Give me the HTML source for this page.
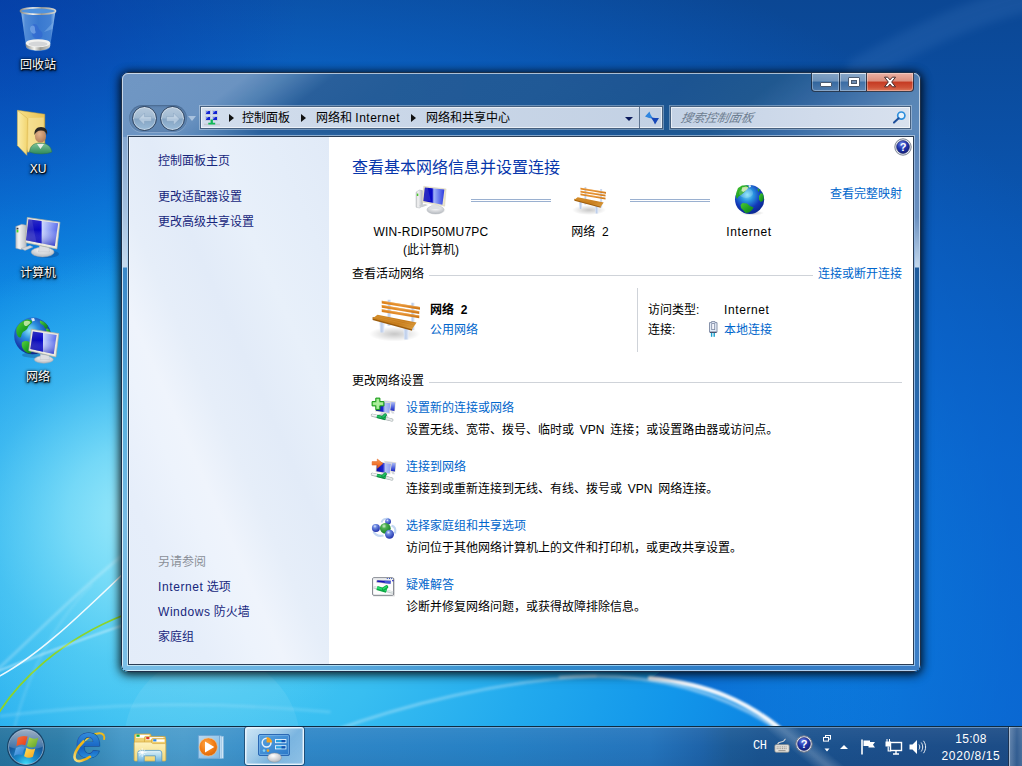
<!DOCTYPE html>
<html lang="zh-CN">
<head>
<meta charset="utf-8">
<title>网络和共享中心</title>
<style>
*,*:before,*:after{box-sizing:border-box;margin:0;padding:0}
html,body{width:1022px;height:766px;overflow:hidden;background:#0b58b8}
body{font-family:"Liberation Sans","Noto Sans CJK SC",sans-serif;font-size:12px;color:#000;position:relative}
.abs{position:absolute}
#bg{position:absolute;left:0;top:0;width:1022px;height:766px}
/* desktop icons */
.dlabel{position:absolute;width:76px;text-align:center;color:#fff;font-size:12px;line-height:14px;white-space:nowrap;
 text-shadow:0 1px 2px #000,0 0 3px rgba(0,0,0,.95),1px 1px 1px rgba(0,0,0,.9),0 2px 4px rgba(0,0,0,.6)}
/* window */
#win{position:absolute;left:121px;top:72px;width:800px;height:600px;border-radius:7px;
 box-shadow:0 1px 8px 1px rgba(0,0,0,.78),0 3px 13px 0 rgba(0,0,0,.32);overflow:hidden}
#gbg{position:absolute;left:-121px;top:-72px;width:1022px;height:766px;filter:blur(5px)}
#glass{position:absolute;left:0;top:0;width:800px;height:600px;border-radius:7px;border:1px solid #1d2f48;
 background:
  linear-gradient(118deg,rgba(255,255,255,0) 0,rgba(255,255,255,0) 8%,rgba(255,255,255,.07) 12%,rgba(255,255,255,0) 17%,rgba(255,255,255,.06) 24%,rgba(255,255,255,0) 30%,rgba(255,255,255,0) 100%),
  linear-gradient(90deg,rgba(186,204,228,.52) 0%,rgba(182,202,227,.47) 18%,rgba(170,195,225,.30) 38%,rgba(160,190,225,.17) 55%,rgba(160,190,225,.15) 78%,rgba(170,195,228,.30) 100%)}
#glass:before{content:"";position:absolute;left:0;top:0;right:0;height:66px;border-radius:6px 6px 0 0;opacity:.95;
 background:linear-gradient(143deg,#7197c3 0,#7096c2 5%,#6c93c0 14.5%,#4f7fb2 19%,#275d99 24.5%,#225a96 32%,#205894 50%,#1c5490 64.6%,#20588f 75%,#3a6ca4 83.7%,#5a86b6 92.7%,#608bbb 100%);
 -webkit-mask-image:linear-gradient(180deg,#000 0,#000 90%,rgba(0,0,0,.7) 100%)}
#glass:after{content:"";position:absolute;left:0;top:0;right:0;bottom:0;border-radius:6px;border:1px solid rgba(255,255,255,.62)}
#content{position:absolute;left:7px;top:64px;width:786px;height:529px;border:1px solid #2b3d55;background:#fff;
 box-shadow:0 0 0 1px rgba(255,255,255,.45)}
#left{position:absolute;left:0;top:0;width:200px;height:527px;border-left:1px solid #f8fbfe;
 background:linear-gradient(66deg,#e3ecf9 0%,#e6eefa 18%,#edf3fc 30%,#eff4fc 36%,#e6eef9 46%,#e2ebf8 58%,#e8f0fa 72%,#e4edf9 86%,#e1eaf7 100%)}
#left a{position:absolute;left:29px;color:#1e3287;white-space:nowrap;line-height:14px;text-decoration:none}
.lnk{color:#0066cc;text-decoration:none;white-space:nowrap}
.t{position:absolute;white-space:nowrap;line-height:14px}
#cap{position:absolute;left:690px;top:1px;width:103px;height:19px}
.cb{position:absolute;top:0;height:19px;border:1px solid rgba(25,40,62,.85);border-top:none;
 background:linear-gradient(180deg,rgba(255,255,255,.42) 0,rgba(255,255,255,.30) 45%,rgba(255,255,255,.02) 50%,rgba(255,255,255,.14) 100%);
 box-shadow:inset 0 0 0 1px rgba(255,255,255,.32)}
.cx{background:linear-gradient(180deg,#ecb1a4 0,#dc8f7d 45%,#c53a22 50%,#cf5237 80%,#dc7a5c 100%)}
.gmin{position:absolute;left:8px;top:9px;width:12px;height:5px;background:#fff;border:1px solid #4a5a70;border-radius:1px}
.gmax{position:absolute;left:8px;top:4px;width:12px;height:10px;border:1px solid #4a5a70;background:#fff;border-radius:1px}
.gmax:after{content:"";position:absolute;left:2px;top:2px;width:6px;height:4px;border:1px solid #4a5a70;background:#6e8db2}
#navpill{position:absolute;left:8px;top:33px;width:58px;height:27px;border-radius:14px;background:rgba(30,60,100,.16);box-shadow:inset 0 1px 2px rgba(20,40,70,.35),0 1px 0 rgba(255,255,255,.2)}
.nb{position:absolute;top:34px;width:25px;height:25px;border-radius:50%;border:1px solid #2f4460;
 background:linear-gradient(180deg,#b6c9dc 0,#a0b9d1 48%,#84a4c3 52%,#9abbd8 100%);box-shadow:inset 0 0 0 1px rgba(255,255,255,.38)}
.nb svg{position:absolute;left:0;top:0}
#addr{position:absolute;left:79px;top:34px;width:463px;height:23px;border:1px solid #46607f;
 background:linear-gradient(90deg,#d3deed 0,#cad7e8 40%,#c3d1e4 100%);box-shadow:0 0 0 1px rgba(255,255,255,.33),inset 0 0 0 1px rgba(255,255,255,.6)}
#srch{position:absolute;left:549px;top:34px;width:241px;height:23px;border:1px solid #46607f;
 background:linear-gradient(90deg,#c4d2e5 0,#d0dbeb 60%,#d8e1ee 100%);box-shadow:0 0 0 1px rgba(255,255,255,.33),inset 0 0 0 1px rgba(255,255,255,.6)}
.ar{position:absolute;top:7px;width:0;height:0;border-top:4px solid transparent;border-bottom:4px solid transparent;border-left:5px solid #111}
#pg{position:absolute;left:-129px;top:-137px;width:1022px;height:766px}
.nav{color:#17267c}
#pg .t{margin-top:1px}
#pg .lp{margin-top:2px}
.ctr{text-align:center}
/* taskbar */
#tb{position:absolute;left:0;top:726px;width:1022px;height:40px;
 background:linear-gradient(180deg,rgba(255,255,255,.06) 0,rgba(255,255,255,0) 50%,rgba(0,20,60,.06) 100%),
 linear-gradient(90deg,#26749f 0%,#2c7ca8 6%,#4498c8 12%,#4a9ccc 18%,#3088c8 29%,#2680c4 49%,#2474bc 63.6%,#1e64aa 68.5%,#1c5a96 71.4%,#1a5490 74.4%,#1c4e8a 88%,#1c4c86 100%);
 border-top:1px solid #0e2a40}
#tb:before{content:"";position:absolute;left:0;top:0;width:100%;height:1px;background:rgba(190,225,250,.42)}
</style>
</head>
<body>
<svg id="bg" viewBox="0 0 1022 766">
 <defs>
  <linearGradient id="bgv" x1="0" y1="0" x2="0" y2="1">
   <stop offset="0" stop-color="#0b4794"/><stop offset=".3" stop-color="#0a56b2"/><stop offset=".6" stop-color="#0a61c8"/><stop offset="1" stop-color="#0a67d2"/>
  </linearGradient>
  <radialGradient id="bgc" cx="230" cy="640" r="1000" gradientUnits="userSpaceOnUse" gradientTransform="translate(230 640) scale(1 .75) translate(-230 -640)">
   <stop offset="0" stop-color="#48c9f3"/><stop offset=".15" stop-color="#38bef1"/><stop offset=".3" stop-color="#22aaee"/><stop offset=".45" stop-color="#1296ea"/><stop offset=".6" stop-color="#0c80e0" stop-opacity=".9"/><stop offset=".8" stop-color="#0a6ad4" stop-opacity=".5"/><stop offset="1" stop-color="#0a62cc" stop-opacity="0"/>
  </radialGradient>
  <radialGradient id="bgg" cx="135" cy="515" r="270" gradientUnits="userSpaceOnUse">
   <stop offset="0" stop-color="#a0ecfb" stop-opacity=".95"/><stop offset=".25" stop-color="#8ee6fa" stop-opacity=".75"/><stop offset=".55" stop-color="#7adff8" stop-opacity=".35"/><stop offset="1" stop-color="#6ad8f6" stop-opacity="0"/>
  </radialGradient>
  <linearGradient id="bgd" x1="700" y1="690" x2="900" y2="690" gradientUnits="userSpaceOnUse"><stop offset="0" stop-color="#0a66d0" stop-opacity=".75"/><stop offset="1" stop-color="#0a66d0" stop-opacity="0"/></linearGradient>
  <radialGradient id="bgt" cx="0" cy="0" r="300" gradientUnits="userSpaceOnUse">
   <stop offset="0" stop-color="#0032aa" stop-opacity=".52"/><stop offset=".5" stop-color="#0032aa" stop-opacity=".26"/><stop offset="1" stop-color="#0032aa" stop-opacity="0"/>
  </radialGradient>
  <filter id="bl4" x="-20%" y="-20%" width="140%" height="140%"><feGaussianBlur stdDeviation="4"/></filter>
  <filter id="bl1" x="-20%" y="-20%" width="140%" height="140%"><feGaussianBlur stdDeviation=".9"/></filter>
  <filter id="bl2" x="-20%" y="-20%" width="140%" height="140%"><feGaussianBlur stdDeviation="1.4"/></filter>
 </defs>
 <g id="bgall">
 <rect width="1022" height="766" fill="url(#bgv)"/>
 <rect width="1022" height="766" fill="url(#bgc)"/>
 <rect width="1022" height="766" fill="url(#bgg)"/>
 <rect width="320" height="320" fill="url(#bgt)"/>
 <path d="M650 679 C705 685 748 700 792 740 L1022 740 L1022 600 L760 600 Z" fill="url(#bgd)"/>
 <!-- light streaks -->
 <g fill="none" stroke-linecap="round">
  <path d="M-2 714 C18 682 60 640 124 615" stroke="#8cd428" stroke-width="1.8" opacity="1"/>
  <path d="M-2 677 C40 655 85 610 124 573" stroke="#fff" stroke-width="1.6" opacity=".9"/>
  <path d="M-2 669 C30 640 70 598 124 554" stroke="#fff" stroke-width="1.2" filter="url(#bl2)" opacity=".55"/>
  <path d="M-2 671 C40 655 85 638 124 625" stroke="#fff" stroke-width="1.3" filter="url(#bl1)" opacity=".8"/>
  <path d="M14 730 C25 680 55 620 92 585" stroke="#fff" stroke-width="1" filter="url(#bl2)" opacity=".35"/>
  <path d="M330 732 C400 706 500 680 596 676" stroke="#fff" stroke-width="1.6" filter="url(#bl2)" opacity=".6"/>
  <path d="M560 677 C640 671 720 686 792 739" stroke="#fff" stroke-width="2.6" filter="url(#bl2)" opacity=".6"/>
  <path d="M650 678 C705 684 748 699 792 739" stroke="#fff" stroke-width="4.5" filter="url(#bl1)" opacity=".95"/>
  <path d="M0 716 C100 704 200 700 330 712" stroke="#c8f0ff" stroke-width="1.4" filter="url(#bl2)" opacity=".4"/>
  <circle cx="212" cy="742" r="88" fill="#fff" opacity=".07"/>
  <path d="M860 70 C930 30 980 10 1022 0" stroke="#5a8fd0" stroke-width="26" filter="url(#bl4)" opacity=".16"/>
 </g>
 </g>
</svg>

<!-- desktop icons -->
<svg class="abs" style="left:14px;top:2px" width="48" height="52" viewBox="0 0 48 52">
 <defs>
  <linearGradient id="rb" x1="0" y1="0" x2="1" y2="0"><stop offset="0" stop-color="#9cc4ee" stop-opacity=".95"/><stop offset=".12" stop-color="#5a94dc" stop-opacity=".9"/><stop offset=".5" stop-color="#3f7fd4" stop-opacity=".88"/><stop offset=".86" stop-color="#4a88d8" stop-opacity=".9"/><stop offset="1" stop-color="#a4caf0" stop-opacity=".95"/></linearGradient>
  <linearGradient id="rbm" x1="0" y1="0" x2="1" y2="0"><stop offset="0" stop-color="#8a8a84"/><stop offset=".35" stop-color="#f4f4f0"/><stop offset=".6" stop-color="#9a9a94"/><stop offset="1" stop-color="#d8d8d2"/></linearGradient>
 </defs>
 <path d="M7 9L12 45c.4 2.4 5.3 4 12 4s11.6-1.6 12-4L41.5 9z" fill="url(#rb)"/>
 <path d="M30 30L39.5 20 38.6 27z" fill="#7fb2ea" opacity=".5"/>
 <path d="M17.5 24c2-3 5-2 6 0s1 3 3 4.5 3 5 1 7-6 2-8-.5-1-4-2-6-1-3.5 0-5z" fill="#2f64d0" opacity=".6"/>
 <path d="M16.5 25c1-2 3-2 4-.5s0 3 1 5-2 3-3.5 1.5-2.5-4-1.5-6z" fill="#8cb8ec" opacity=".6"/>
 <path d="M11.8 43.5c0 2.8 5.4 5 12.2 5s12.2-2.2 12.2-5v-2.5H11.8z" fill="url(#rbm)"/>
 <ellipse cx="24" cy="41.2" rx="12.2" ry="4" fill="#f2f2f0"/>
 <ellipse cx="24" cy="42" rx="9.5" ry="2.6" fill="#d4d6d8"/>
 <ellipse cx="24" cy="9" rx="17.6" ry="3.3" fill="#4f92de" stroke="url(#rbm)" stroke-width="1.5"/>
</svg>
<div class="dlabel" style="left:0;top:58px">回收站</div>

<svg class="abs" style="left:14px;top:108px" width="44" height="50" viewBox="0 0 44 50">
 <defs>
  <linearGradient id="uf" x1="0" y1="0" x2="1" y2="0"><stop offset="0" stop-color="#f7e08a"/><stop offset="1" stop-color="#e9c152"/></linearGradient>
  <linearGradient id="uf2" x1="0" y1="0" x2="1" y2="0"><stop offset="0" stop-color="#fbedaa"/><stop offset="1" stop-color="#f2d570"/></linearGradient>
  <radialGradient id="sk" cx=".4" cy=".35" r=".8"><stop offset="0" stop-color="#e3b28a"/><stop offset="1" stop-color="#a87450"/></radialGradient>
  <linearGradient id="sh" x1="0" y1="0" x2="0" y2="1"><stop offset="0" stop-color="#7fc69a"/><stop offset="1" stop-color="#2f8a5a"/></linearGradient>
 </defs>
 <path d="M3.8 2.3l27 3.9v34l-17.2 4z" fill="url(#uf)" stroke="#c9a23a" stroke-width=".5"/>
 <path d="M14.5 10l15.2-.5v30l-15.6 3.5z" fill="#fbefb5" opacity=".45"/>
 <path d="M3.4 2.3l10.2 8.2-.8 36.8-9.4-9.8z" fill="url(#uf2)" stroke="#d4b04c" stroke-width=".5"/>
 <path d="M15.5 44c.5-6 4-9 10.5-9s11 3 12 9c-5 2.5-17 2.5-22.5 0z" fill="url(#sh)" stroke="#2a7048" stroke-width=".5"/>
 <path d="M23 36l3.5 5 3.5-5z" fill="#e8efe6"/>
 <ellipse cx="26.5" cy="28" rx="5.6" ry="6.6" fill="url(#sk)"/>
 <path d="M20.5 27c-.5-5 2-8 6.5-8s7 3 6 8c-1-3-2.5-4.5-6-4.5s-5 1.5-6.5 4.5z" fill="#2a2622"/>
</svg>
<div class="dlabel" style="left:0;top:162px">XU</div>

<svg class="abs" style="left:13px;top:214px" width="50" height="46" viewBox="0 0 50 46">
 <defs>
  <linearGradient id="scr" x1="0" y1="0" x2="1" y2="0"><stop offset="0" stop-color="#1414b0"/><stop offset=".4" stop-color="#0606c4"/><stop offset=".47" stop-color="#0a0ac8"/><stop offset=".5" stop-color="#c8d4fc"/><stop offset="1" stop-color="#5468ec"/></linearGradient>
  <linearGradient id="scrv" x1="0" y1="0" x2="0" y2="1"><stop offset="0" stop-color="#fff" stop-opacity=".14"/><stop offset=".4" stop-color="#fff" stop-opacity="0"/><stop offset="1" stop-color="#0000a0" stop-opacity=".5"/></linearGradient>
  <linearGradient id="twr" x1="0" y1="0" x2="1" y2="0"><stop offset="0" stop-color="#c8cacc"/><stop offset=".3" stop-color="#f4f4f4"/><stop offset="1" stop-color="#b8bcc2"/></linearGradient>
  <radialGradient id="bs" cx=".5" cy=".3" r=".7"><stop offset="0" stop-color="#fff"/><stop offset="1" stop-color="#b4b8be"/></radialGradient>
 </defs>
 <ellipse cx="33" cy="40" rx="13" ry="4" fill="#003" opacity=".18"/>
 <path d="M2.8 12.5l6-2.2 4.5 1v22.5l-5.5 1.8-5-1.4z" fill="url(#twr)" stroke="#9a9ea6" stroke-width=".5"/>
 <rect x="3.6" y="15.8" width="1.8" height="2.6" fill="#48d828"/><rect x="3.6" y="13.8" width="1.8" height="1.6" fill="#3a3a44"/>
 <path d="M8 34.5l9-3 3 1.5-8 3.5z" fill="#d4d6da" stroke="#a4a8ae" stroke-width=".4"/>
 <ellipse cx="29.6" cy="38.1" rx="11.5" ry="4.8" fill="url(#bs)" stroke="#a8acb2" stroke-width=".5"/>
 <path d="M26.5 31.5l9.5 2 .5 4.5h-11z" fill="#dcdee2" stroke="#b4b8be" stroke-width=".4"/>
 <path d="M14.3 3.5l32.6 4.7-3 26.8-31.6-6.4z" fill="#eceae0" stroke="#b8b4a4" stroke-width=".7"/>
 <path d="M15.4 5.2l29.8 4-3.4 22.8-28.8-5.8z" fill="url(#scr)"/>
 <path d="M15.4 5.2l29.8 4-3.4 22.8-28.8-5.8z" fill="url(#scrv)"/>
 <path d="M15.4 5.2l3.600.5 4.4 22.6-10.4-2.1z" fill="#fff" opacity=".1"/>
</svg>
<div class="dlabel" style="left:0;top:266px">计算机</div>

<svg class="abs" style="left:12px;top:315px" width="52" height="50" viewBox="0 0 52 50">
 <defs>
  <radialGradient id="gl" cx=".42" cy=".36" r=".66"><stop offset="0" stop-color="#8ae4f8"/><stop offset=".35" stop-color="#2a8ede"/><stop offset=".75" stop-color="#1840b0"/><stop offset="1" stop-color="#10267e"/></radialGradient>
  <linearGradient id="ld" x1="0" y1="0" x2="1" y2="1"><stop offset="0" stop-color="#58d03c"/><stop offset=".5" stop-color="#22a624"/><stop offset="1" stop-color="#0c741c"/></linearGradient>
 </defs>
 <ellipse cx="24" cy="40" rx="14" ry="3" fill="#003" opacity=".2"/>
 <circle cx="20.6" cy="20.9" r="18.4" fill="url(#gl)"/>
 <path d="M4.5 13c2-4 5.5-7 10-8.5 3 0 5 .5 5.5 2s-1.5 2.5-3 4-1 3-3 4.5-3 1.5-4 3.5-.5 4-2 4-3-2-3.5-4.5 0-3.5 0-5z" fill="url(#ld)"/>
 <path d="M12 6.5c2-1 4.5-1 6 0s-1 3-2.5 4-3 .5-3.5-1 0-2 0-3z" fill="#e8f4c4" opacity=".75"/><path d="M19 3.5l3-.5 1 2.5-2.5 1z" fill="#fff" opacity=".85"/>
 <path d="M10 27.5c2-2 5-2 7.5-.5s4 2 4 4-1 5-3 7.5c-3 0-6-2-7.5-4.5s-1.5-4.5-1-6.5z" fill="url(#ld)"/>
 <path d="M28 5.5c3 .5 6 2.5 8 5.5l-1 3c-1.5 0-2.5-1-3-2.5s-2-1.5-3-2.5-1.5-2.5-1-3.5z" fill="url(#ld)" opacity=".95"/>
 <path d="M34.5 13.5c2 0 3.5 1.5 4 4l-3.5-.5c-1-1-1-2.5-.5-3.5z" fill="url(#ld)"/>
 <ellipse cx="31.8" cy="44.5" rx="9.5" ry="3.7" fill="url(#bs)" stroke="#a8acb2" stroke-width=".5"/>
 <path d="M28.5 39l8.5 1.500.5 4h-9.5z" fill="#dcdee2" stroke="#b4b8be" stroke-width=".4"/>
 <path d="M19.4 14.2l27.4 4.4-2.9 23.4-27.1-6.3z" fill="#eceae0" stroke="#b0ada0" stroke-width=".7"/>
 <path d="M20.9 16.4l23.7 3.6-2.9 19-23.4-5.1z" fill="url(#scr)"/>
 <path d="M20.9 16.4l23.7 3.6-2.9 19-23.4-5.1z" fill="url(#scrv)"/>
</svg>
<div class="dlabel" style="left:0;top:370px">网络</div>

<div id="win">
 <svg id="gbg" viewBox="0 0 1022 766"><use href="#bgall"/></svg>
 <div id="glass"></div>
 <div class="abs" style="left:2px;top:65px;width:4px;height:529px;background:linear-gradient(180deg,#86a8d0 0,#a4c0de 70px,#c6daee 130px,#3a88c8 131px,#4896d0 200px,#58b0de 273px,#78bce4 383px,#7abee6 100%)"></div>
 <div class="abs" style="left:794px;top:65px;width:4px;height:529px;background:linear-gradient(180deg,#5a84b8 0,#6a90c0 80px,#c4d8ec 130px,#1e5a9c 131px,#28689c 200px,#2868b0 273px,#3878c0 383px,#3c7ec6 100%)"></div>
 <div class="abs" style="left:2px;top:594px;width:796px;height:4px;background:linear-gradient(90deg,#7abee6 0,#62aee0 25%,#308ccc 50%,#2f7cc6 75%,#3c7ec6 100%)"></div>
 <!-- caption buttons -->
 <div id="cap">
  <div class="cb" style="left:0;width:29px;border-radius:0 0 0 4px"><i class="gmin"></i></div>
  <div class="cb" style="left:28px;width:28px"><i class="gmax"></i></div>
  <div class="cb cx" style="left:55px;width:48px;border-radius:0 0 4px 0">
   <svg width="14" height="12" viewBox="0 0 14 12" style="position:absolute;left:16px;top:3px"><path d="M1.5 1.2h3.2L7 3.9 9.3 1.2h3.2L8.7 6l3.8 4.8H9.3L7 8.1 4.7 10.8H1.5L5.3 6z" fill="#fff" stroke="#4a2a2a" stroke-width="1" stroke-linejoin="round"/></svg>
  </div>
 </div>
 <!-- nav -->
 <div id="navpill"></div>
 <div class="nb" style="left:11px"><svg width="24" height="24" viewBox="0 0 24 24"><path d="M5.5 12l6-6v3.7h7v4.6h-7V18z" fill="#dce8f4" fill-opacity=".5" stroke="#7f9cba" stroke-opacity=".55" stroke-width=".7"/></svg></div>
 <div class="nb" style="left:39px"><svg width="24" height="24" viewBox="0 0 24 24"><path d="M18.5 12l-6-6v3.7h-7v4.6h7V18z" fill="#dce8f4" fill-opacity=".5" stroke="#7f9cba" stroke-opacity=".55" stroke-width=".7"/></svg></div>
 <div class="abs" style="left:67px;top:44px;width:0;height:0;border-left:4px solid transparent;border-right:4px solid transparent;border-top:5px solid #a9c2de"></div>
 <!-- address bar -->
 <div id="addr">
  <svg class="abs" style="left:3px;top:2px" width="17" height="17" viewBox="0 0 17 17">
   <g fill="#1222d0" stroke="#c4ccdc" stroke-width="1"><rect x="1.5" y="1.5" width="5" height="4"/><rect x="8.5" y="1.5" width="5" height="4"/><rect x="1.5" y="7.5" width="5" height="4"/><rect x="8.5" y="7.5" width="5" height="4"/></g>
   <path d="M2 2h2.5l-2.5 2.5zM9 2h2.5l-2.5 2.5zM2 8h2.5l-2.5 2.5zM9 8h2.5l-2.5 2.5z" fill="#8ca4f4" opacity=".8"/>
   <path d="M0 15.5h16" stroke="#c4c8d0" stroke-width="1.3"/><path d="M6.6 10.5h2.3v3.3h2.3v1.8H4.3v-1.8h2.3z" fill="#12b858"/>
  </svg>
  <span class="ar" style="left:28px"></span><span class="t" style="left:41px;top:4px">控制面板</span>
  <span class="ar" style="left:100px"></span><span class="t" style="left:115px;top:4px">网络和 <span style="letter-spacing:.5px">Internet</span></span>
  <span class="ar" style="left:210px"></span><span class="t" style="left:225px;top:4px">网络和共享中心</span>
  <div class="abs" style="left:424px;top:10px;width:0;height:0;border-left:4px solid transparent;border-right:4px solid transparent;border-top:4px solid #0b1a5c"></div>
  <div class="abs" style="left:438px;top:0;width:1px;height:21px;background:#5d7390"></div>
  <svg class="abs" style="left:443px;top:3px" width="16" height="16" viewBox="0 0 16 16"><path d="M1 6.5L5.5 1.5 6.5 4.5 9 8.5 5 8z" fill="#2f86e0"/><path d="M15 8L11 14.5 9.6 11.5 7 7.5 11.2 8z" fill="#1747b8"/></svg>
 </div>
 <!-- search -->
 <div id="srch">
  <span class="t" style="left:10px;top:4px;color:#6d7d90;font-style:italic;transform:skewX(-12deg)">搜索控制面板</span>
  <svg class="abs" style="left:221px;top:3px" width="15" height="15" viewBox="0 0 15 15"><circle cx="9.3" cy="5.6" r="3.6" fill="#e8f2fb" stroke="#2f8fdc" stroke-width="1.7"/><path d="M6.6 8.3L2 12.6" stroke="#1f4f9a" stroke-width="2" stroke-linecap="round"/></svg>
 </div>
 <div id="content">
  <div id="left"></div>
  <div id="pg">
   <!-- left pane -->
   <span class="t nav lp" style="left:158px;top:152px">控制面板主页</span>
   <span class="t nav lp" style="left:158px;top:188px">更改适配器设置</span>
   <span class="t nav lp" style="left:158px;top:213px">更改高级共享设置</span>
   <span class="t lp" style="left:158px;top:553px;color:#8a8f98">另请参阅</span>
   <span class="t nav lp" style="left:158px;top:578px"><span style="letter-spacing:.6px">Internet</span> 选项</span>
   <span class="t nav lp" style="left:158px;top:603px"><span style="letter-spacing:.55px">Windows</span> 防火墙</span>
   <span class="t nav lp" style="left:158px;top:628px">家庭组</span>
   <!-- shared defs -->
   <svg width="0" height="0" style="position:absolute">
    <defs>
     <linearGradient id="wd1" x1="0" y1="0" x2="1" y2="0"><stop offset="0" stop-color="#dc8018"/><stop offset=".5" stop-color="#e49030"/><stop offset="1" stop-color="#cc7414"/></linearGradient>
     <linearGradient id="wd2" x1="0" y1="0" x2="1" y2="1"><stop offset="0" stop-color="#d28a24"/><stop offset=".6" stop-color="#c67c1c"/><stop offset="1" stop-color="#dda040"/></linearGradient>
     <linearGradient id="lg" x1="0" y1="0" x2="1" y2="0"><stop offset="0" stop-color="#e6eefa"/><stop offset=".45" stop-color="#bccdea"/><stop offset="1" stop-color="#eef3fc"/></linearGradient>
     <radialGradient id="bshd" cx=".5" cy=".5" r=".5"><stop offset="0" stop-color="#000" stop-opacity=".22"/><stop offset="1" stop-color="#000" stop-opacity="0"/></radialGradient>
     <radialGradient id="g2" cx=".42" cy=".34" r=".62"><stop offset="0" stop-color="#7fe4f8"/><stop offset=".35" stop-color="#2a94e0"/><stop offset=".75" stop-color="#1238b8"/><stop offset="1" stop-color="#0c2a98"/></radialGradient>
     <linearGradient id="ld2" x1="0" y1="0" x2="1" y2="1"><stop offset="0" stop-color="#4cc834"/><stop offset=".5" stop-color="#22a424"/><stop offset="1" stop-color="#0c7a1c"/></linearGradient>
     <linearGradient id="scr2" x1="0" y1="0" x2="1" y2="0"><stop offset="0" stop-color="#1414b4"/><stop offset=".42" stop-color="#0606c8"/><stop offset=".5" stop-color="#a0b4f8"/><stop offset="1" stop-color="#2c3ce0"/></linearGradient>
     <linearGradient id="scr3" x1="0" y1="0" x2="1" y2="0"><stop offset="0" stop-color="#0a0aa8"/><stop offset=".45" stop-color="#1a22cc"/><stop offset=".62" stop-color="#b4c2f6"/><stop offset="1" stop-color="#8c9cf0"/></linearGradient>
     <linearGradient id="scr4" x1="0" y1="0" x2="0" y2="1"><stop offset="0" stop-color="#c4d0f8"/><stop offset=".6" stop-color="#5468e0"/><stop offset="1" stop-color="#1a22c0"/></linearGradient>
     <linearGradient id="gp" x1="0" y1="0" x2="0" y2="1"><stop offset="0" stop-color="#3fd47a"/><stop offset=".5" stop-color="#0aa04a"/><stop offset="1" stop-color="#0a8a3c"/></linearGradient>
     <linearGradient id="gyp" x1="0" y1="0" x2="0" y2="1"><stop offset="0" stop-color="#f4f6f6"/><stop offset=".5" stop-color="#c4cccc"/><stop offset="1" stop-color="#e4e8e8"/></linearGradient>
     <radialGradient id="sb" cx=".38" cy=".3" r=".75"><stop offset="0" stop-color="#dfe8fb"/><stop offset=".3" stop-color="#6c88e0"/><stop offset="1" stop-color="#1c2ca8"/></radialGradient>
     <radialGradient id="sg" cx=".38" cy=".3" r=".75"><stop offset="0" stop-color="#d4f0d0"/><stop offset=".3" stop-color="#4cb050"/><stop offset="1" stop-color="#0f7a22"/></radialGradient>
     <linearGradient id="arw" x1="0" y1="0" x2="0" y2="1"><stop offset="0" stop-color="#fa9a50"/><stop offset="1" stop-color="#e85a18"/></linearGradient>
     <g id="bench">
      <ellipse cx="29" cy="30" rx="17" ry="5" fill="url(#bshd)"/>
      <path d="M24.3 7.1h2.3l.2 17.4h-2.7z" fill="url(#lg)"/><path d="M40 9.1h2.4l.1 18.3h-2.6z" fill="url(#lg)"/>
      <path d="M20.5 7.8l25.5 4.2v1.8L20.5 9.6zM20.5 10.7l25 4.1v1.8l-25-4.1zM20.5 13.5l25 4.2v1.8l-25-4.2z" fill="url(#wd1)"/>
      <path d="M20.5 8.1l25.5 4.2M20.5 11l25 4.1M20.5 13.8l25 4.2" stroke="#f2b060" stroke-width=".35" fill="none"/>
      <path d="M18.8 21.3h3.8l-.4 7.7h-2.8z" fill="url(#lg)"/><path d="M34.8 24.8h3.9l-.4 8.8h-2.9z" fill="url(#lg)"/>
      <path d="M14.4 18.7l26.3 7.1v2L14.4 20.7z" fill="#9c5c0c"/>
      <path d="M14.4 19.7l3.3-2.5 26 5.2-3 4.4z" fill="url(#wd2)"/>
      <path d="M16 18.7l25.8 5.9M17 17.9l25.8 5.5" stroke="#e0a048" stroke-width=".3" fill="none" opacity=".7"/>
     </g>
     <g id="mons">
      <path d="M17.4 8.2l12.4 1.4-.9 10-4.7-.8z" fill="#e6e2d0"/><path d="M18.2 9l11 1.3-.8 8.6-9.6-1.6z" fill="url(#scr4)"/>
      <path d="M24.5 19l1.5 2.6h2.6l-1.4-2.2z" fill="#d4d8dc"/>
      <path d="M9.8 8.8l15.5 1.7-1.5 11.4-14.8-2.4z" fill="#e9e5d2"/><path d="M10.5 9.6l14 1.6-1.3 9.7-13.3-2.2z" fill="url(#scr3)"/>
      <path d="M15 20.6l-1 2.4 6 1 1.2-2.4z" fill="#d4d8dc"/><path d="M12.5 22.6l9.5 1.7" stroke="#c4c8cc" stroke-width="1"/>
     </g>
     <g id="pipe">
      <path d="M6.3 23.2l19.6 4.8" stroke="#9aa4a4" stroke-width="3" stroke-linecap="round"/><path d="M6.3 23.2l19.6 4.8" stroke="url(#gyp)" stroke-width="2" stroke-linecap="round"/>
      <path d="M6.5 22.7l19 4.6" stroke="#fff" stroke-width=".6" opacity=".8"/>
      <path d="M11 24.4l8.6 2.1" stroke="#0c8a3e" stroke-width="3.4"/><path d="M11 24.2l8.6 2.1" stroke="#1fc060" stroke-width="1.8"/>
      <path d="M17 25.2l2.3-2.2" stroke="#0c8a3e" stroke-width="3.2" stroke-linecap="round"/><path d="M17 24.9l2.2-2" stroke="#22c466" stroke-width="1.6" stroke-linecap="round"/>
     </g>
    </defs>
   </svg>
   <!-- map icons -->
   <svg class="abs" style="left:405px;top:178px" width="50" height="44" viewBox="0 0 50 44">
    <ellipse cx="31" cy="32.5" rx="10" ry="4" fill="url(#bshd)"/>
    <path d="M11 14.2l3.2-2.2 3.200.6v15.6l-3 1.8-3.4-.8z" fill="url(#twr)" stroke="#a4a8ae" stroke-width=".4"/><rect x="11.8" y="15.6" width="1.5" height="2.4" fill="#48c828"/>
    <path d="M14 27.6l6-1.6 3 1-6 2.2z" fill="#c8ccd0"/>
    <ellipse cx="30.5" cy="31.8" rx="8.6" ry="4.2" fill="url(#bs)" stroke="#b4b8be" stroke-width=".4"/>
    <path d="M26.5 26.5h7l1.5 4.5h-9.5z" fill="#dcdfe2"/>
    <path d="M18.7 8.3l22.4 2.6-1.4 17.3-22.5-4.1z" fill="#ebe6cc" stroke="#cfc8a8" stroke-width=".4"/>
    <path d="M19.8 9.5l19.6 2-2 15.2-19.1-3.7z" fill="url(#scr2)"/>
    <path d="M19.8 9.5l3 .3 3 13.2-7.5 0z" fill="#fff" opacity=".1"/>
   </svg>
   <svg class="abs" style="left:560px;top:180px" width="60" height="40" viewBox="0 0 60 40"><use href="#bench"/></svg>
   <svg class="abs" style="left:725px;top:178px" width="50" height="44" viewBox="0 0 50 44">
    <ellipse cx="27" cy="35" rx="12" ry="2.6" fill="url(#bshd)"/>
    <circle cx="24.6" cy="21.5" r="14.6" fill="url(#g2)"/>
    <path d="M11.5 14l1.5-4 4-2.4 5-.4 2 1.8-2 2-3 3.5-3 2.5-2.5 1.5-1.5 2.5-1.2-3z" fill="url(#ld2)"/>
    <path d="M17 9.5l4-1 2.5 1-2 2.5-3 2-2-1z" fill="#f4f8d0" opacity=".75"/><path d="M23.5 7.3l2-.3.5 2-2 .5z" fill="#fff" opacity=".85"/>
    <path d="M15.5 27l2-2 4.500.5 3 2.5 3.7 1.5-1.7 2.5-3 2.5-3.500.5-2.5-3-2-2z" fill="url(#ld2)"/>
    <path d="M34 18l2-3 2 1 .8 4-.8 3-2.5 1-1.5-2.5z" fill="url(#ld2)"/><path d="M32.5 10.5l2 .5-.5 3-1-1z" fill="url(#ld2)"/>
    <ellipse cx="21" cy="15" rx="7" ry="5" fill="#fff" opacity=".18"/>
   </svg>
   <!-- big bench -->
   <svg class="abs" style="left:351px;top:289px" width="90" height="60" viewBox="0 0 60 40"><use href="#bench"/></svg>
   <!-- plug -->
   <svg class="abs" style="left:700px;top:316px" width="30" height="26" viewBox="0 0 30 26">
    <path d="M9.5 6.6h2v-1h3.5v1h2v9.6h-7.5z" fill="#e4ecf8" stroke="#7c88a2" stroke-width=".9"/>
    <rect x="11.7" y="7.6" width="3" height="6" fill="#f4f6fc" stroke="#7c88a2" stroke-width=".8"/>
    <rect x="10" y="15.8" width="6.5" height="1.1" fill="#3c4866"/>
    <rect x="10.9" y="17" width="1.4" height="3.8" fill="#14a0d0"/><rect x="13.5" y="17" width="1.4" height="3.8" fill="#14a0d0"/>
   </svg>
   <!-- task icons -->
   <svg class="abs" style="left:366px;top:392px" width="36" height="36" viewBox="0 0 36 36">
    <use href="#mons"/><use href="#pipe"/>
    <path d="M9.8 6.1h4.1v3.5h4v4.3h-4v3.8H9.8v-3.8H6.1V9.6h3.7z" fill="#8ce47c" stroke="#129612" stroke-width="1" stroke-linejoin="round"/>
    <path d="M10.8 7.2h2.1v3.5h4v2.1h-4v3.8h-2.1v-3.8H7.2v-2.1h3.6z" fill="#b8f0a8" opacity=".8"/>
   </svg>
   <svg class="abs" style="left:366px;top:451px" width="36" height="36" viewBox="0 0 36 36">
    <g transform="translate(.5 1.600)"><use href="#mons"/></g><use href="#pipe"/>
    <path d="M6.1 10.6h5.2V8l5.7 4.6-5.7 4.7v-3.2H6.1z" fill="url(#arw)" stroke="#e0601c" stroke-width=".5" stroke-linejoin="round"/>
   </svg>
   <svg class="abs" style="left:366px;top:510px" width="36" height="36" viewBox="0 0 36 36">
    <path d="M7.5 21.5c2 4 6 5 10 4" fill="none" stroke="#a8c4ec" stroke-width="2.2" opacity=".7"/><path d="M15.5 12.5c1-3 4-4.5 7.5-3.5" fill="none" stroke="#a8c4ec" stroke-width="2" opacity=".7"/><path d="M25.5 15.5c3 1 4.5 4 3.5 8" fill="none" stroke="#a8c4ec" stroke-width="2.2" opacity=".7"/>
    <circle cx="22.1" cy="11.5" r="2.9" fill="url(#sb)"/><circle cx="9.9" cy="17.9" r="4" fill="url(#sb)"/><circle cx="19.3" cy="18.3" r="5.4" fill="url(#sg)"/><circle cx="23.5" cy="24.2" r="4.5" fill="url(#sb)"/>
   </svg>
   <svg class="abs" style="left:366px;top:569px" width="36" height="36" viewBox="0 0 36 36">
    <rect x="7" y="9.2" width="22" height="18.4" rx="1.2" fill="#000" opacity=".12"/>
    <rect x="6.6" y="8.7" width="21" height="17.6" rx="1.2" fill="#fdfdfd" stroke="#7e828a" stroke-width="1"/>
    <path d="M7.5 10h19" stroke="#dfe3ea" stroke-width="1.2"/><path d="M20.8 9.5h1M23 9.5h1M25.2 9.5h1" stroke="#3450b8" stroke-width="1"/>
    <path d="M11 11l14 .7-.5 3.2-14-1.7z" fill="#1212b8" stroke="#e8e0c0" stroke-width=".5"/><path d="M18 11.4l7 .3-.5 3.2-5-.6z" fill="#5468e0" opacity=".8"/><rect x="26.2" y="11" width="1.3" height="1.3" fill="#1a1ac0"/>
    <path d="M7.5 18.2l19.5 5.5" stroke="#c8d0d0" stroke-width="2.6"/><path d="M7.5 17.8l19.5 5.5" stroke="#eef2f2" stroke-width="1"/>
    <path d="M11 19l9.5 2.8" stroke="#0ca844" stroke-width="4"/><path d="M11 18.6l9.5 2.8" stroke="#28dc6c" stroke-width="2"/><path d="M17.5 20l3-2" stroke="#0ca844" stroke-width="3.6" stroke-linecap="round"/><path d="M17.5 19.6l2.8-1.8" stroke="#28dc6c" stroke-width="1.6" stroke-linecap="round"/>
   </svg>
   <!-- help -->
   <svg class="abs" style="left:894px;top:138px" width="18" height="18" viewBox="0 0 18 18">
    <defs><radialGradient id="hg" cx=".4" cy=".25" r=".8"><stop offset="0" stop-color="#6d86e8"/><stop offset=".5" stop-color="#2238b0"/><stop offset="1" stop-color="#101c78"/></radialGradient></defs>
    <circle cx="9" cy="9" r="8.2" fill="#e6e9f0" stroke="#7c8494" stroke-width="1"/><circle cx="9" cy="9" r="6.4" fill="url(#hg)" stroke="#1a2060" stroke-width=".6"/>
    <text x="9" y="13" font-family="Liberation Sans,sans-serif" font-size="11" font-weight="bold" fill="#fff" text-anchor="middle">?</text>
   </svg>
   <!-- heading -->
   <span class="t" style="left:352px;top:157px;font-size:16px;line-height:20px;color:#0636ab">查看基本网络信息并设置连接</span>
   <!-- map -->
   <div class="abs" style="left:471px;top:199px;width:80px;height:3px;border-top:1px solid #9ab0d0;border-bottom:1px solid #9ab0d0"></div>
   <div class="abs" style="left:630px;top:199px;width:80px;height:3px;border-top:1px solid #9ab0d0;border-bottom:1px solid #9ab0d0"></div>
   <span class="t ctr" style="left:351px;top:224px;width:160px;letter-spacing:.25px">WIN-RDIP50MU7PC</span>
   <span class="t ctr" style="left:351px;top:242px;width:160px">(此计算机)</span>
   <span class="t ctr" style="left:510px;top:224px;width:160px">网络&nbsp; 2</span>
   <span class="t ctr" style="left:669px;top:224px;width:160px;letter-spacing:.6px">Internet</span>
   <a class="t lnk" style="left:830px;top:186px">查看完整映射</a>
   <!-- active networks -->
   <span class="t" style="left:352px;top:266px">查看活动网络</span>
   <div class="abs" style="left:429px;top:275px;width:384px;height:1px;background:#cfd3d9"></div>
   <a class="t lnk" style="left:818px;top:266px">连接或断开连接</a>
   <span class="t" style="left:430px;top:302px;font-weight:bold">网络&nbsp; 2</span>
   <a class="t lnk" style="left:430px;top:322px">公用网络</a>
   <div class="abs" style="left:637px;top:288px;width:1px;height:64px;background:#cfd3d9"></div>
   <span class="t" style="left:648px;top:302px">访问类型:</span><span class="t" style="left:724px;top:302px;letter-spacing:.6px">Internet</span>
   <span class="t" style="left:648px;top:322px">连接:</span><a class="t lnk" style="left:724px;top:322px">本地连接</a>
   <!-- change settings -->
   <span class="t" style="left:352px;top:373px">更改网络设置</span>
   <div class="abs" style="left:429px;top:382px;width:473px;height:1px;background:#cfd3d9"></div>
   <a class="t lnk" style="left:406px;top:400px">设置新的连接或网络</a>
   <span class="t" style="left:406px;top:422px;word-spacing:2.5px">设置无线、宽带、拨号、临时或 VPN 连接；或设置路由器或访问点。</span>
   <a class="t lnk" style="left:406px;top:459px">连接到网络</a>
   <span class="t" style="left:406px;top:481px;word-spacing:2.5px">连接到或重新连接到无线、有线、拨号或 VPN 网络连接。</span>
   <a class="t lnk" style="left:406px;top:518px">选择家庭组和共享选项</a>
   <span class="t" style="left:406px;top:540px">访问位于其他网络计算机上的文件和打印机，或更改共享设置。</span>
   <a class="t lnk" style="left:406px;top:577px">疑难解答</a>
   <span class="t" style="left:406px;top:599px">诊断并修复网络问题，或获得故障排除信息。</span>
  </div>
 </div>
</div>

<div id="tb">
 <div class="abs" style="left:764px;top:1px;width:34px;height:39px;transform:skewX(51deg);transform-origin:0 0;background:linear-gradient(90deg,rgba(255,255,255,0),rgba(255,255,255,.2) 45%,rgba(255,255,255,.2) 55%,rgba(255,255,255,0))"></div>
 <!-- start orb -->
 <svg class="abs" style="left:4px;top:-2px" width="44" height="44" viewBox="0 0 44 44">
  <defs>
   <radialGradient id="og" cx=".5" cy="1" r=".95"><stop offset="0" stop-color="#3fe0fa"/><stop offset=".3" stop-color="#1a8ccc"/><stop offset=".65" stop-color="#175a9c"/><stop offset="1" stop-color="#234c7c"/></radialGradient>
   <linearGradient id="oh" x1="0" y1="0" x2="0" y2="1"><stop offset="0" stop-color="#fff" stop-opacity=".75"/><stop offset="1" stop-color="#fff" stop-opacity=".18"/></linearGradient>
   <linearGradient id="fr" x1="0" y1="0" x2="1" y2="1"><stop offset="0" stop-color="#f6743a"/><stop offset="1" stop-color="#e23a1c"/></linearGradient>
   <linearGradient id="fg" x1="0" y1="0" x2="1" y2="1"><stop offset="0" stop-color="#b6d84a"/><stop offset="1" stop-color="#5aa42c"/></linearGradient>
   <linearGradient id="fb" x1="0" y1="0" x2="1" y2="1"><stop offset="0" stop-color="#6ab4ee"/><stop offset="1" stop-color="#2a7ad0"/></linearGradient>
   <linearGradient id="fy" x1="0" y1="0" x2="1" y2="1"><stop offset="0" stop-color="#ffe25a"/><stop offset="1" stop-color="#f5a21c"/></linearGradient>
  </defs>
  <circle cx="22" cy="22" r="19" fill="#0e2a48" opacity=".7"/>
  <circle cx="22" cy="22" r="17.4" fill="url(#og)" stroke="#a8c8e2" stroke-opacity=".7" stroke-width="1"/>
  <path d="M5.2 21.5a16.8 16.8 0 0 1 33.6 0c-6 3.6-27.6 3.6-33.6 0z" fill="url(#oh)" opacity=".75"/>
  <g>
   <path d="M13.6 12.8Q18.5 9.8 23.6 11.6L21.2 20.2Q16.5 18.6 12.4 21.3z" fill="url(#fr)"/>
   <path d="M25.3 12.3Q29.5 15 34.3 12.8L31.8 21.6Q27.5 23.6 22.9 20.9z" fill="url(#fg)"/>
   <path d="M11.9 23.1Q16.2 20.4 20.6 22L18.3 30.3Q14 28.6 9.8 31z" fill="url(#fb)"/>
   <path d="M22.4 22.7Q26.8 25.4 31.3 23.4L28.9 31.8Q24.6 34 20.1 31.2z" fill="url(#fy)"/>
  </g>

 </svg>
 <!-- IE -->
 <svg class="abs" style="left:70px;top:2px" width="38" height="36" viewBox="0 0 38 36">
  <defs><linearGradient id="ieg" x1="0" y1="0" x2="0" y2="1"><stop offset="0" stop-color="#a4e0fb"/><stop offset=".3" stop-color="#3590de"/><stop offset=".62" stop-color="#1662c2"/><stop offset="1" stop-color="#38b8f2"/></linearGradient>
  <linearGradient id="ier" x1="1" y1="0" x2="0" y2="1"><stop offset="0" stop-color="#f4c020"/><stop offset=".6" stop-color="#f0b010"/><stop offset="1" stop-color="#f8e48c"/></linearGradient></defs>
  <path d="M33.4 5.8C30.4 2.2 21.5 5 13.5 12.5" fill="none" stroke="url(#ier)" stroke-width="2" stroke-linecap="round"/>
  <text x="5.5" y="28.8" font-family="Liberation Sans,sans-serif" font-weight="bold" font-size="46" fill="url(#ieg)" stroke="#0e3c8c" stroke-width=".9" paint-order="stroke">e</text>
  <path d="M13.5 12.5C6.5 19 2.6 27.5 5.6 30.8c2.4 2.6 8.4 1.2 14.4-3" fill="none" stroke="url(#ier)" stroke-width="2.6" stroke-linecap="round"/>
  <path d="M33.4 5.8c.9 1.2 1.1 2.700.7 4.4" fill="none" stroke="#f0b414" stroke-width="1.8" stroke-linecap="round"/>
 </svg>
 <!-- explorer -->
 <svg class="abs" style="left:133px;top:5px" width="34" height="31" viewBox="0 0 34 31">
  <defs><linearGradient id="fo" x1="0" y1="0" x2="0" y2="1"><stop offset="0" stop-color="#fdf3c0"/><stop offset="1" stop-color="#f2d776"/></linearGradient>
  <linearGradient id="st" x1="0" y1="0" x2="0" y2="1"><stop offset="0" stop-color="#e4f5fd"/><stop offset=".45" stop-color="#a8d8f4"/><stop offset="1" stop-color="#5aa8e0"/></linearGradient></defs>
  <rect x="1.5" y="2" width="16.5" height="10" rx="1.2" fill="#f0d070" stroke="#d0a43a" stroke-width=".7"/>
  <rect x="3" y="2.8" width="13.5" height="3" fill="#fff"/><rect x="3.4" y="2.6" width="3.2" height="2.2" fill="#14b03c"/>
  <rect x="11.5" y="4.4" width="21" height="8" rx="1.2" fill="#f0d070" stroke="#d0a43a" stroke-width=".7"/>
  <rect x="13" y="5.2" width="17.5" height="2.6" fill="#fff"/><rect x="13.2" y="5" width="3.2" height="2.2" fill="#dc3a2a"/>
  <rect x="18.5" y="6.6" width="14.3" height="7" rx="1.2" fill="#f0d070" stroke="#d0a43a" stroke-width=".7"/>
  <rect x="20" y="7.4" width="11.5" height="2.4" fill="#fff"/><rect x="20.2" y="7.2" width="3.2" height="2.2" fill="#2a86e8"/>
  <path d="M1.2 11.2q0-1.2 1.2-1.2h15.6l1.8 1.6h11.8q1.2 0 1.2 1.2V27.8q0 1.2-1.2 1.2H2.4q-1.2 0-1.2-1.2z" fill="url(#fo)" stroke="#d9b04a" stroke-width=".8"/>
  <path d="M4.8 30.2V21q0-2.6 2.6-2.6h18.8q2.6 0 2.6 2.6v9.2h-6.4v-6.4H11.2v6.4z" fill="url(#st)" stroke="#4a94cc" stroke-width=".8" opacity=".95"/>
  <path d="M9.2 16v9M5 20.5h8.5M6.2 17.6l6 5.8M12.2 17.6l-6 5.8" stroke="#fff" stroke-width=".7" opacity=".9"/><circle cx="9.2" cy="20.5" r="1.3" fill="#fff"/>
 </svg>
 <!-- wmp -->
 <svg class="abs" style="left:197px;top:6px" width="29" height="28" viewBox="0 0 29 28">
  <defs><radialGradient id="wo" cx=".42" cy=".35" r=".75"><stop offset="0" stop-color="#ffa848"/><stop offset=".55" stop-color="#f27c14"/><stop offset="1" stop-color="#d06008"/></radialGradient>
  <linearGradient id="wb" x1="0" y1="0" x2="1" y2="1"><stop offset="0" stop-color="#b8daf2"/><stop offset="1" stop-color="#7fb8e2"/></linearGradient></defs>
  <rect x="5" y="3.3" width="21.4" height="22" fill="#cfe6f6" stroke="#8fbcde" stroke-width=".6"/>
  <rect x="3.2" y="2.9" width="21" height="22.4" fill="#c2def4" stroke="#86b6dc" stroke-width=".6"/>
  <rect x="1.3" y="2.5" width="21.3" height="22.8" fill="url(#wb)" stroke="#6aa2d0" stroke-width=".8"/>
  <circle cx="11.3" cy="14" r="9.1" fill="url(#wo)" stroke="#f8c890" stroke-width=".6"/>
  <path d="M8 8.6l9.3 5.4-9.3 5.4z" fill="#fff"/>
 </svg>
 <!-- active button -->
 <div class="abs" style="left:245px;top:0;width:59px;height:38px;border:1px solid rgba(238,247,254,.92);border-radius:3px;
  background:linear-gradient(135deg,rgba(235,246,254,.82) 0,rgba(205,230,248,.68) 40%,rgba(165,206,238,.62) 60%,rgba(185,220,245,.7) 100%);box-shadow:inset 0 0 0 1px rgba(255,255,255,.35),0 0 0 1px rgba(16,44,74,.6)"></div>
 <svg class="abs" style="left:257px;top:6px" width="34" height="30" viewBox="0 0 34 30">
  <defs><linearGradient id="cpb" x1="0" y1="0" x2="1" y2="1"><stop offset="0" stop-color="#58a4e2"/><stop offset="1" stop-color="#2a78c8"/></linearGradient>
  <radialGradient id="ms" cx=".4" cy=".3" r=".8"><stop offset="0" stop-color="#fff"/><stop offset="1" stop-color="#a9aeb6"/></radialGradient></defs>
  <rect x="1.5" y="1.5" width="31" height="21" rx="1.5" fill="url(#cpb)" stroke="#2a68b4" stroke-width="1"/><rect x="2.5" y="2.5" width="29" height="19" rx="1" fill="none" stroke="#8cc0ec" stroke-width=".7" opacity=".7"/>
  <circle cx="9.6" cy="9.6" r="4.4" fill="none" stroke="#e6f2fb" stroke-width="1.5"/><path d="M9.6 9.6V4a5.6 5.6 0 0 1 5.6 5.6z" fill="#f6a11c"/>
  <rect x="18.5" y="6.5" width="10.4" height="3.2" fill="#2aa0e0" stroke="#e6f2fb" stroke-width=".9"/><rect x="24.5" y="7" width="3.9" height="2.2" fill="#1450b0"/><rect x="18.5" y="12.7" width="10.4" height="3.2" fill="#2aa0e0" stroke="#e6f2fb" stroke-width=".9"/><rect x="24.5" y="13.2" width="3.9" height="2.2" fill="#1450b0"/>
  <circle cx="7" cy="17.6" r="1.3" fill="#7fd2f6"/><circle cx="11" cy="17.6" r="1.3" fill="#f6a11c"/>
  <ellipse cx="17.5" cy="24.6" rx="7" ry="4.6" fill="url(#ms)" stroke="#8a9098" stroke-width=".5"/>
 </svg>
 <!-- tray -->
 <span class="abs" style="left:753px;top:12px;color:#fff;font-family:'Liberation Mono','DejaVu Sans Mono',monospace;font-size:12px;line-height:14px;letter-spacing:-.5px">CH</span>
 <svg class="abs" style="left:774px;top:11px" width="16" height="16" viewBox="0 0 18 18">
  <path d="M4 7c1-3 4-2 6-3s2-2.5 3-3" fill="none" stroke="#d8d8d8" stroke-width="1.2"/>
  <rect x="1" y="7.5" width="16" height="8.5" rx="1.5" fill="#e3e1dc" stroke="#9a978f" stroke-width=".8"/>
  <path d="M3 10h12M3 12h12" stroke="#8d8a84" stroke-width="1" stroke-dasharray="1.2 .8"/><path d="M5 14.2h8" stroke="#8d8a84" stroke-width="1"/>
 </svg>
 <svg class="abs" style="left:795px;top:8px" width="18" height="18" viewBox="0 0 18 18">
  <circle cx="9" cy="9" r="8.2" fill="#dfe4ee" stroke="#6c7484" stroke-width="1"/><circle cx="9" cy="9" r="6.4" fill="url(#hg)" stroke="#1a2060" stroke-width=".6"/>
  <text x="9" y="13" font-family="Liberation Sans,sans-serif" font-size="11" font-weight="bold" fill="#fff" text-anchor="middle">?</text>
 </svg>
 <svg class="abs" style="left:822px;top:7px" width="10" height="22" viewBox="0 0 10 22">
  <rect x="3.5" y="1.5" width="5" height="3.6" fill="none" stroke="#fff" stroke-width="1"/><rect x="1.5" y="3.5" width="5" height="3.6" fill="#234f86" stroke="#fff" stroke-width="1"/>
  <path d="M2.5 14.5h5l-2.5 3z" fill="#fff"/>
 </svg>
 <div class="abs" style="left:840px;top:18px;width:0;height:0;border-left:4px solid transparent;border-right:4px solid transparent;border-bottom:4px solid #fff"></div>
 <svg class="abs" style="left:860px;top:11px" width="18" height="18" viewBox="0 0 18 18"><path d="M2 1.5v15" stroke="#fff" stroke-width="1.6"/><path d="M3.5 2.5h6.5v1.5h5l-2 2.8 2 2.7H8.5V8H3.5z" fill="#fff"/></svg>
 <svg class="abs" style="left:884px;top:11px" width="19" height="18" viewBox="0 0 19 18">
  <rect x="6.5" y="4.5" width="11" height="8" fill="#1c4a80" stroke="#fff" stroke-width="1.4"/><path d="M9 16h6M12 13v3" stroke="#fff" stroke-width="1.4"/>
  <path d="M3 1v3M5.5 1v3" stroke="#fff" stroke-width="1"/><rect x="1.5" y="3.5" width="5.5" height="5" fill="#fff"/><path d="M4.2 8.5v4.5h3" stroke="#fff" stroke-width="1.2" fill="none"/>
 </svg>
 <svg class="abs" style="left:908px;top:11px" width="19" height="18" viewBox="0 0 19 18">
  <path d="M1.5 6.5h3l4.5-4.5v14l-4.5-4.5h-3z" fill="#fff"/><path d="M11 6.5c1 1.5 1 3.5 0 5M13.2 4.5c2 2.8 2 6.2 0 9M15.5 2.8c2.8 4 2.8 8.4 0 12.4" fill="none" stroke="#fff" stroke-width="1" opacity=".9"/>
 </svg>
 <span class="abs" style="left:941px;top:5px;width:60px;text-align:center;color:#fff;font-size:12px;line-height:14px;letter-spacing:.3px">15:08</span>
 <span class="abs" style="left:936px;top:22px;width:70px;text-align:center;color:#fff;font-size:12px;line-height:14px;letter-spacing:.6px">2020/8/15</span>
 <div class="abs" style="left:1008px;top:0;width:14px;height:40px;border-left:1px solid rgba(10,25,50,.7);background:linear-gradient(90deg,rgba(255,255,255,.32),rgba(255,255,255,.1) 60%,rgba(255,255,255,.2));box-shadow:inset 1px 0 0 rgba(255,255,255,.45)"></div>
</div>
</body>
</html>
